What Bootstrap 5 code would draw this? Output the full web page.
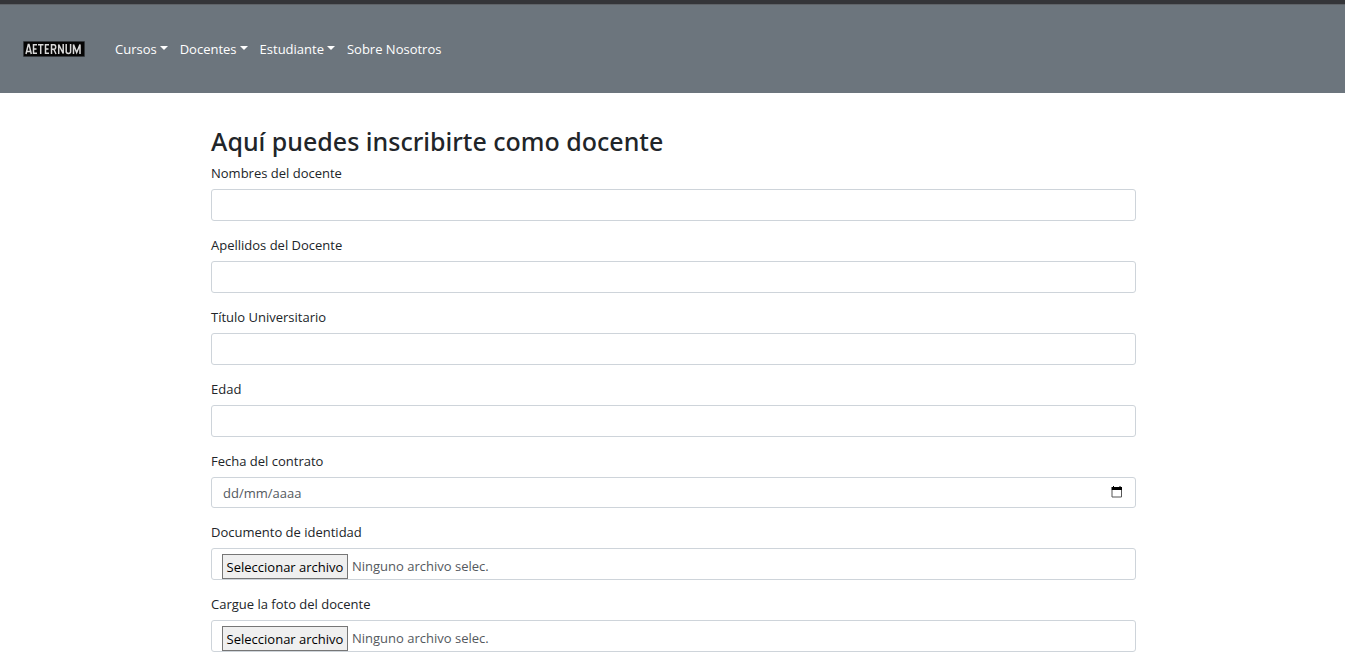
<!DOCTYPE html>
<html lang="es">
<head>
<meta charset="utf-8">
<meta name="viewport" content="width=device-width, initial-scale=1">
<title>Aeternum - Inscripción de docentes</title>
<link href="https://cdn.jsdelivr.net/npm/bootstrap@5.3.0/dist/css/bootstrap.min.css" rel="stylesheet">
<style>
  body { font-family: "Open Sans", "Noto Sans", sans-serif; font-size: 13px; line-height: 20px; }
  .site-nav { background: #6c757d; border-top: 4px solid #343539; min-height: 93px; padding: 0 23px; box-shadow: inset 0 1px 0 #5f6368; }
  .brand-logo { display: block; width: 62px; height: 16px; }
  .site-nav .navbar-nav { gap: 12px; margin-left: 30px; }
  .site-nav .navbar-nav .nav-link { color: #fff; padding: 6px 0; font-weight: 500; }
  .site-nav .dropdown-toggle::after { margin-left: 3px; border-width: 4px 4px 0; }
  .form-page { max-width: 927px; padding-top: 32px; }
  .form-title { font-family: "Noto Sans", "Open Sans", sans-serif; font-size: 25px; line-height: 32px; font-weight: 500; margin-bottom: 6px; }
  .field { margin-bottom: 14px; }
  .field .form-label { display: block; width: fit-content; margin-bottom: 6px; font-size: 13px; line-height: 20px; }
  .field .form-control { height: 32px; padding: 5px 11px; font-size: 13px; line-height: 20px; border-color: #ced4da; border-radius: 3px; }
  .field .date-box { height: 31px; padding: 4px 11px; }
  .date-box::placeholder { color: #54595e; opacity: 1; }
  .calendar-btn { right: 13px; top: 9px; width: 12px; height: 12px; }
  .calendar-btn svg { display: block; }
  .file-box { overflow: hidden; color: #54595e; }
  .field .file-box { padding: 5px 10px; }
  .file-btn { height: 25px; width: 126px; flex: none; padding: 0; font-size: 13px; line-height: 20px; color: #000; background: #efefef; border: 1px solid #767676; border-radius: 0; white-space: nowrap; }
  .file-name { line-height: 25px; }
</style>
</head>
<body>
<nav class="navbar navbar-expand site-nav" aria-label="Principal">
  <a href="#" class="m-0 p-0" aria-label="Aeternum">
    <svg class="brand-logo" viewBox="0 0 62 16" aria-hidden="true">
      <rect width="62" height="16" rx="1" fill="#34383c"/>
      <rect x="1" y="1" width="60" height="14" fill="#050505"/>
      <g fill="none" stroke="#d9d9d9" stroke-width="1.5">
        <path d="M3 13 5.300 3.500H6L8.300 13M4 10.500H7.400"/>
        <path d="M14 3.700H10.500V12.300H14M10.500 8H13.500"/>
        <path d="M15 3.700H20.500M17.700 3.700V13"/>
        <path d="M26 3.700H22.500V12.300H26M22.500 8H25.500"/>
        <path d="M28.500 13V3.700H31Q32.700 3.700 32.700 6T31 8.300H28.500M30.800 8.300 33 13"/>
        <path d="M35.700 13V3.500L40.200 12.500V3"/>
        <path d="M43.200 3V10.500Q43.200 12.400 45.400 12.400T47.600 10.500V3"/>
        <path d="M50.500 13V3.500L53.700 11.500 57 3.500V13"/>
      </g>
    </svg>
  </a>
  <ul class="navbar-nav">
    <li class="nav-item dropdown">
      <a class="nav-link dropdown-toggle" href="#" role="button" data-bs-toggle="dropdown" aria-expanded="false">Cursos</a>
    </li>
    <li class="nav-item dropdown">
      <a class="nav-link dropdown-toggle" href="#" role="button" data-bs-toggle="dropdown" aria-expanded="false">Docentes</a>
    </li>
    <li class="nav-item dropdown">
      <a class="nav-link dropdown-toggle" href="#" role="button" data-bs-toggle="dropdown" aria-expanded="false">Estudiante</a>
    </li>
    <li class="nav-item"><a class="nav-link" href="#">Sobre Nosotros</a></li>
  </ul>
</nav>

<main class="container-fluid pe-0 form-page" style="--bs-gutter-x: 4px">
  <h1 class="form-title">Aquí puedes inscribirte como docente</h1>
  <form>
    <div class="field">
      <label class="form-label" for="nombres">Nombres del docente</label>
      <input type="text" class="form-control" id="nombres">
    </div>
    <div class="field">
      <label class="form-label" for="apellidos">Apellidos del Docente</label>
      <input type="text" class="form-control" id="apellidos">
    </div>
    <div class="field">
      <label class="form-label" for="titulo">Título Universitario</label>
      <input type="text" class="form-control" id="titulo">
    </div>
    <div class="field">
      <label class="form-label" for="edad">Edad</label>
      <input type="number" class="form-control" id="edad">
    </div>
    <div class="field">
      <label class="form-label" for="fecha">Fecha del contrato</label>
      <div class="position-relative">
        <input type="text" class="form-control date-box" id="fecha" placeholder="dd/mm/aaaa">
        <button type="button" class="calendar-btn position-absolute border-0 bg-transparent p-0" aria-label="Abrir calendario">
          <svg width="12" height="12" viewBox="0 0 12 12" aria-hidden="true">
            <path d="M1 4V11H10.500V4" fill="none" stroke="#555"/>
            <path d="M.5 1H2V0H3V1H8.500V0H9.500V1H11V4H.5Z" fill="#000"/>
          </svg>
        </button>
      </div>
    </div>
    <div class="field">
      <label class="form-label" for="documento">Documento de identidad</label>
      <div class="form-control file-box d-flex align-items-start gap-1">
        <input type="file" class="d-none" id="documento">
        <button type="button" class="file-btn" onclick="document.getElementById('documento').click()">Seleccionar archivo</button>
        <span class="file-name">Ninguno archivo selec.</span>
      </div>
    </div>
    <div class="field">
      <label class="form-label" for="foto">Cargue la foto del docente</label>
      <div class="form-control file-box d-flex align-items-start gap-1">
        <input type="file" class="d-none" id="foto">
        <button type="button" class="file-btn" onclick="document.getElementById('foto').click()">Seleccionar archivo</button>
        <span class="file-name">Ninguno archivo selec.</span>
      </div>
    </div>
  </form>
</main>
<script src="https://cdn.jsdelivr.net/npm/bootstrap@5.3.0/dist/js/bootstrap.bundle.min.js"></script>
</body>
</html>
